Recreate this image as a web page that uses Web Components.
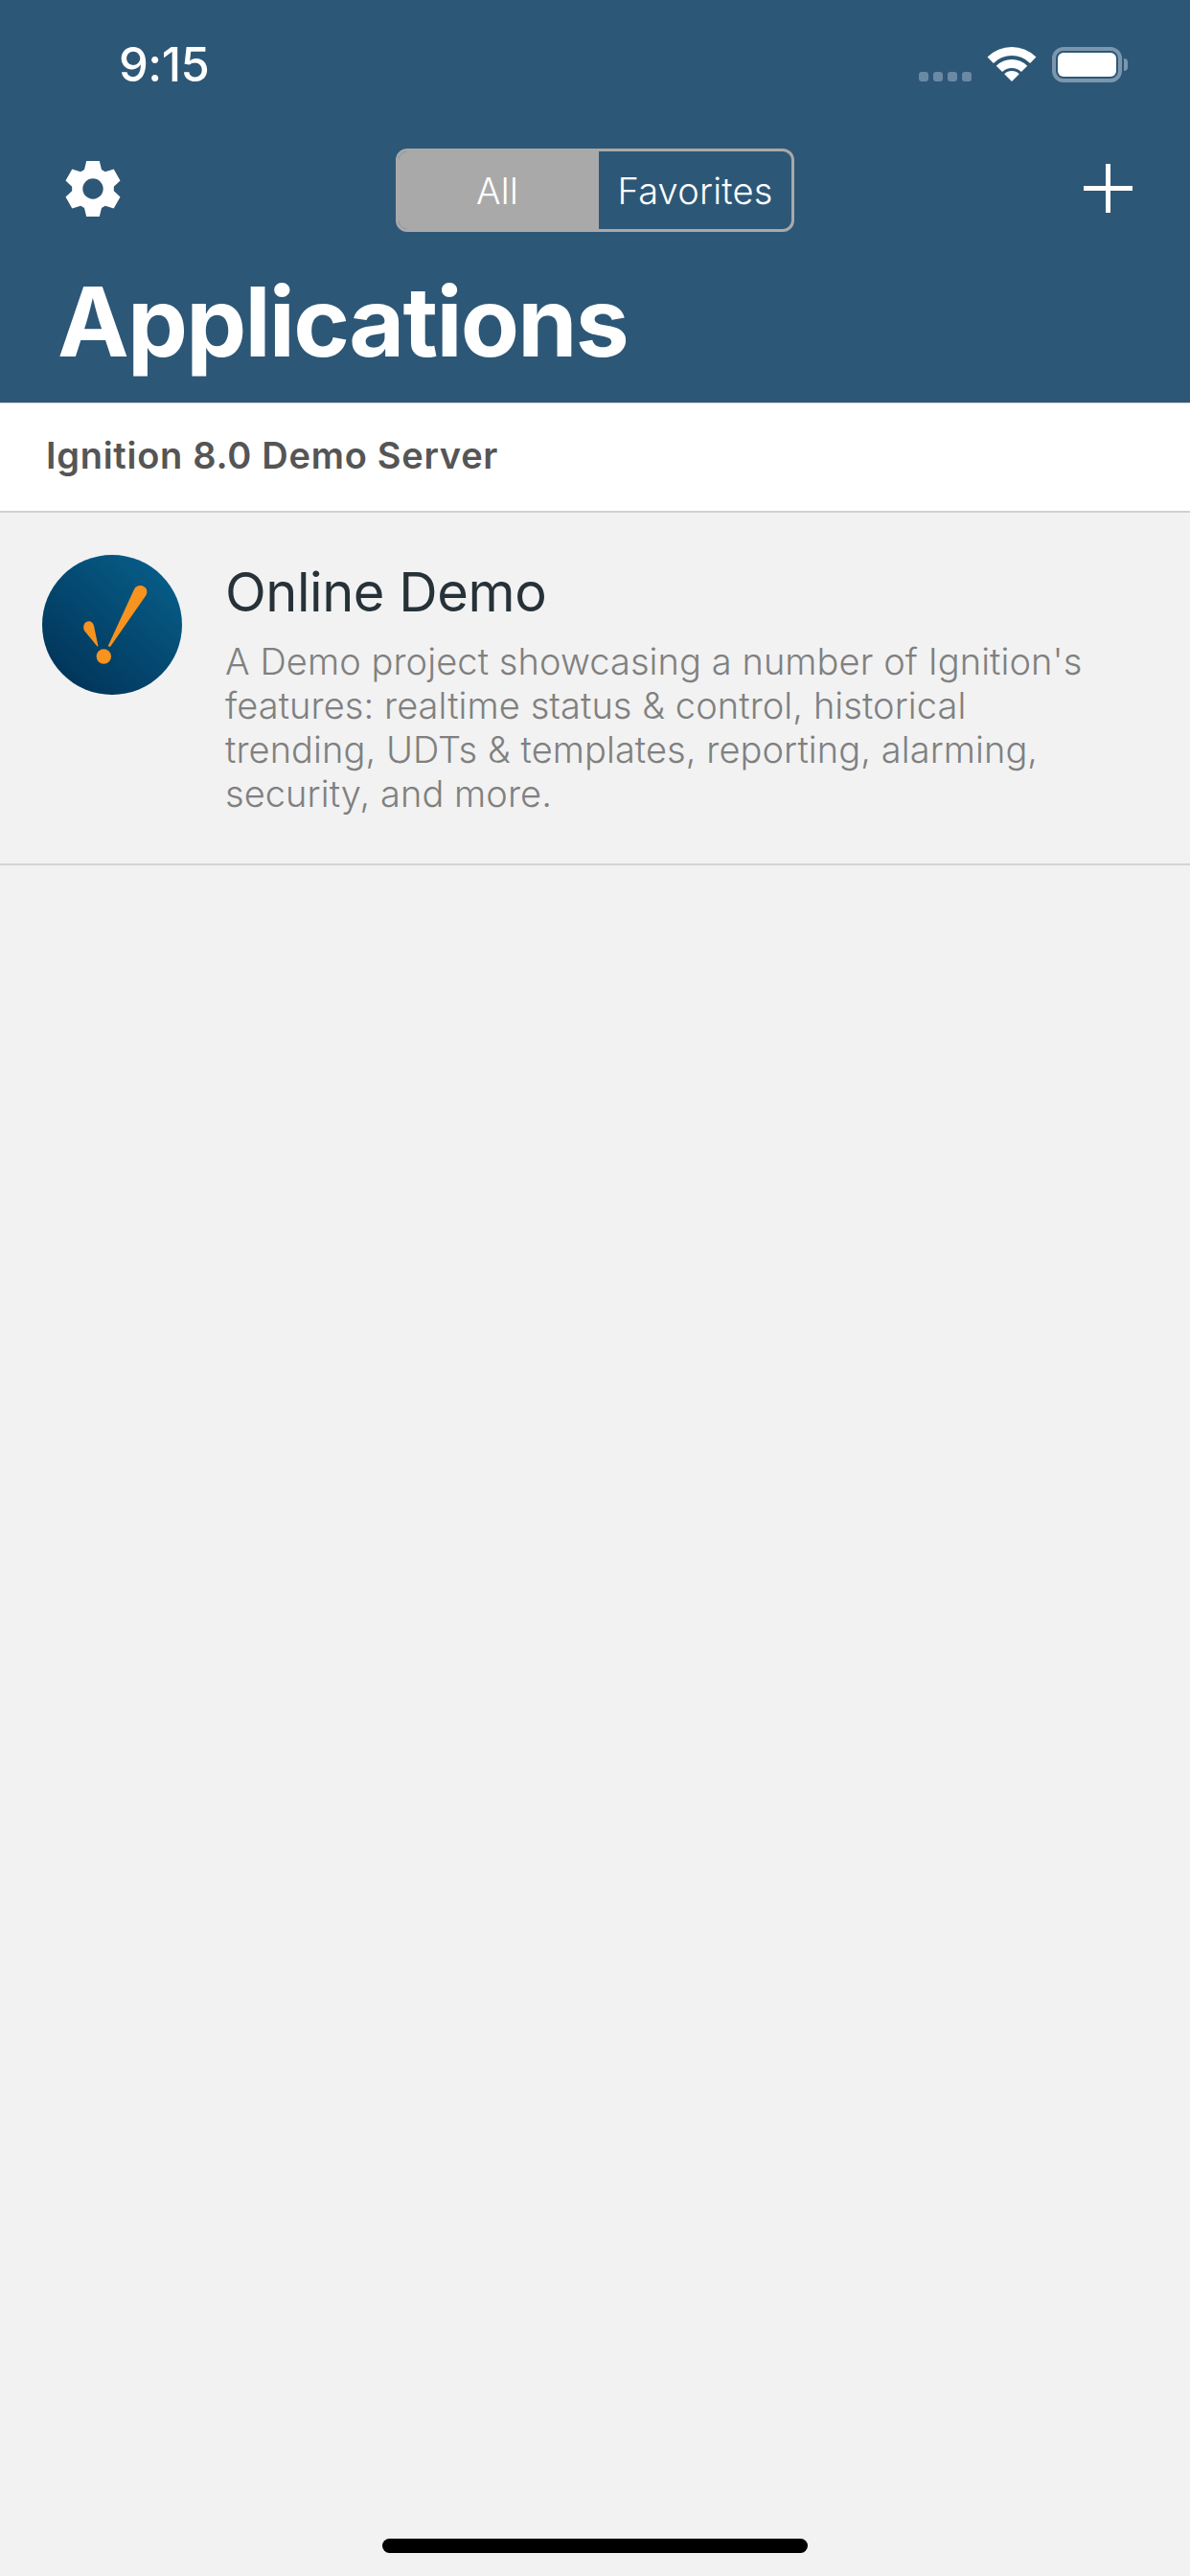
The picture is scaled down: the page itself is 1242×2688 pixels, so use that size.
<!DOCTYPE html>
<html lang="en"><head><meta charset="utf-8"><title>Applications</title>
<style>
html,body{margin:0;padding:0;background:#f2f2f2}
body{font-family:"Inter","Liberation Sans",sans-serif}
</style></head>
<body>
<x-app>
  <x-header slot="header">
    <x-status-bar time="9:15"></x-status-bar>
    <x-nav-bar></x-nav-bar>
    <x-large-title>Applications</x-large-title>
  </x-header>
  <x-section-header>Ignition 8.0 Demo Server</x-section-header>
  <x-app-row name="Online Demo">
    <x-logo slot="icon"></x-logo>
    A Demo project showcasing a number of Ignition's features: realtime status &amp; control, historical trending, UDTs &amp; templates, reporting, alarming, security, and more.
  </x-app-row>
  <x-home-indicator slot="footer"></x-home-indicator>
</x-app>
<script>
function def(name,html,setup){
  customElements.define(name,class extends HTMLElement{
    constructor(){super();this.attachShadow({mode:'open'}).innerHTML=html;}
    connectedCallback(){if(setup)setup(this,this.shadowRoot);}
  });
}
def('x-app',`<style>
:host{display:flex;flex-direction:column;width:1242px;height:2688px;background:#f2f2f2;overflow:hidden}
main{flex:1;min-height:0}
</style><slot name="header"></slot><main><slot></slot></main><slot name="footer"></slot>`);

def('x-header',`<style>
:host{display:block;height:420px;box-sizing:border-box;background:#2d5777;color:#fff;padding-top:49px}
</style><slot></slot>`);

def('x-status-bar',`<style>
:host{display:flex;align-items:flex-start;height:37px;padding:0 65px 0 124px;color:#fff}
.t{font:500 49px/37px "Inter",sans-serif;flex:1;letter-spacing:-.5px}
.dots{display:flex;gap:5px;margin-top:26px}
.dots i{width:10px;height:10px;border-radius:3px;background:#6a8aa3}
svg.w{display:block;margin-left:17px;overflow:visible}
.b{display:flex;align-items:center;margin-left:17px}
.b .box{box-sizing:border-box;width:73px;height:37px;border:4px solid #7b97ae;border-radius:12px;padding:2px}
.b .box i{display:block;width:100%;height:100%;background:#fff;border-radius:6px}
.b .cap{width:4px;height:13px;background:#7b97ae;border-radius:0 6px 6px 0;margin-left:2px}
</style><span class="t"></span>
<span class="dots"><i></i><i></i><i></i><i></i></span>
<svg class="w" width="50" height="36" viewBox="0 0 50 36" fill="#fff"><path d="M-.46 10.54A36 36 0 0 1 50.46 10.54L44.09 16.91A27 27 0 0 0 5.91 16.91Z"/><path d="M8.74 19.74A23 23 0 0 1 41.26 19.74L34.9 26.1A14 14 0 0 0 15.1 26.1Z"/><path d="M17.22 28.22A11 11 0 0 1 32.78 28.22L25 36Z"/></svg>
<span class="b"><span class="box"><i></i></span><span class="cap"></span></span>`,
(h,s)=>{s.querySelector('.t').textContent=h.getAttribute('time');});

def('x-gear-icon',`<style>:host{display:block;width:58px;height:58px}svg{display:block}</style>
<svg width="58" height="58" viewBox="-29 -29 58 58"><path fill="#fff" fill-rule="evenodd"/></svg>`,
(h,s)=>{
  const base=[[-9,-20],[-6.8,-29],[6.8,-29],[9,-20]];let d='';
  for(let i=0;i<6;i++){const a=i*Math.PI/3,c=Math.cos(a),n=Math.sin(a);
    for(const [x,y] of base){d+=(d?'L':'M')+(x*c-y*n).toFixed(2)+' '+(x*n+y*c).toFixed(2);}}
  d+='ZM10.7 0A10.7 10.7 0 1 0 -10.7 0A10.7 10.7 0 1 0 10.7 0Z';
  s.querySelector('path').setAttribute('d',d);
});

def('x-segmented',`<style>
:host{display:flex;box-sizing:border-box;width:416px;height:87px;border:3px solid #a9a9a9;border-radius:12px;overflow:hidden;color:#fff;font:300 38px/1 "Inter",sans-serif;letter-spacing:.2px}
span{display:flex;align-items:center;justify-content:center;height:100%}
.a{width:206px;flex:none;background:#a9a9a9}
.b{flex:1;border-left:3px solid #a9a9a9}
</style><span class="a">All</span><span class="b">Favorites</span>`);

def('x-plus-icon',`<style>:host{display:block;width:51px;height:51px}svg{display:block}</style>
<svg width="51" height="51" viewBox="0 0 51 51" fill="#fff"><rect x="23" y="0" width="5" height="51"/><rect x="0" y="23" width="51" height="5"/></svg>`);

def('x-nav-bar',`<style>
:host{display:flex;align-items:flex-start;box-sizing:border-box;height:87px;margin-top:69px;padding:0 60px 0 68px}
x-gear-icon{margin-top:13px}
x-segmented{margin-left:287px}
x-plus-icon{margin-left:auto;margin-top:16px}
</style><x-gear-icon></x-gear-icon><x-segmented></x-segmented><x-plus-icon></x-plus-icon>`);

def('x-large-title',`<style>
:host{display:block;padding:44px 0 0 60px;font:700 100px/1 "Inter",sans-serif;color:#fff;letter-spacing:-1.75px}
</style><slot></slot>`);

def('x-section-header',`<style>
:host{display:block;box-sizing:border-box;height:115px;background:#fff;border-top:1px solid #cfcfd3;border-bottom:2px solid #d0d0d0;padding:0 0 0 48px;font:600 38px/108px "Inter",sans-serif;color:#555;letter-spacing:.72px}
</style><slot></slot>`);

def('x-logo',`<style>:host{display:block;width:146px;height:146px}svg{display:block}</style>
<svg width="146" height="146" viewBox="0 0 146 146">
<defs><linearGradient id="g" x1="0.15" y1="0.9" x2="0.85" y2="0.1"><stop offset="0" stop-color="#02355a"/><stop offset="1" stop-color="#065c87"/></linearGradient></defs>
<circle cx="73" cy="73" r="73" fill="url(#g)"/>
<g fill="#f7931e">
<path d="M68.7 95.300L96 36C98 32 102 31.500 105 32.500C109 34 110.500 38 108.500 42L71 96Z"/>
<path d="M57.500 95.500L44 79C42.500 76 43 72 46 70C49.500 68 53 70 54 74L58.500 95.500Z"/>
<circle cx="64.300" cy="106" r="7.700"/>
</g></svg>`);

def('x-app-row',`<style>
:host{display:flex;box-sizing:border-box;height:368px;border-bottom:2px solid #d4d4d4;padding:44px 0 0 44px;color:#263238}
.icon{width:191px;flex:none}
.name{font:400 56px/1 "Inter",sans-serif;margin-top:11px;letter-spacing:-.45px}
.desc{font:300 38px/46px "Inter",sans-serif;color:#808080;margin-top:21px;width:920px;letter-spacing:.08px}
</style><div class="icon"><slot name="icon"></slot></div>
<div><div class="name"></div><div class="desc"><slot></slot></div></div>`,
(h,s)=>{s.querySelector('.name').textContent=h.getAttribute('name');});

def('x-home-indicator',`<style>
:host{display:flex;justify-content:center;height:39px}
i{display:block;width:444px;height:15px;border-radius:8px;background:#000}
</style><i></i>`);
</script>
</body></html>
